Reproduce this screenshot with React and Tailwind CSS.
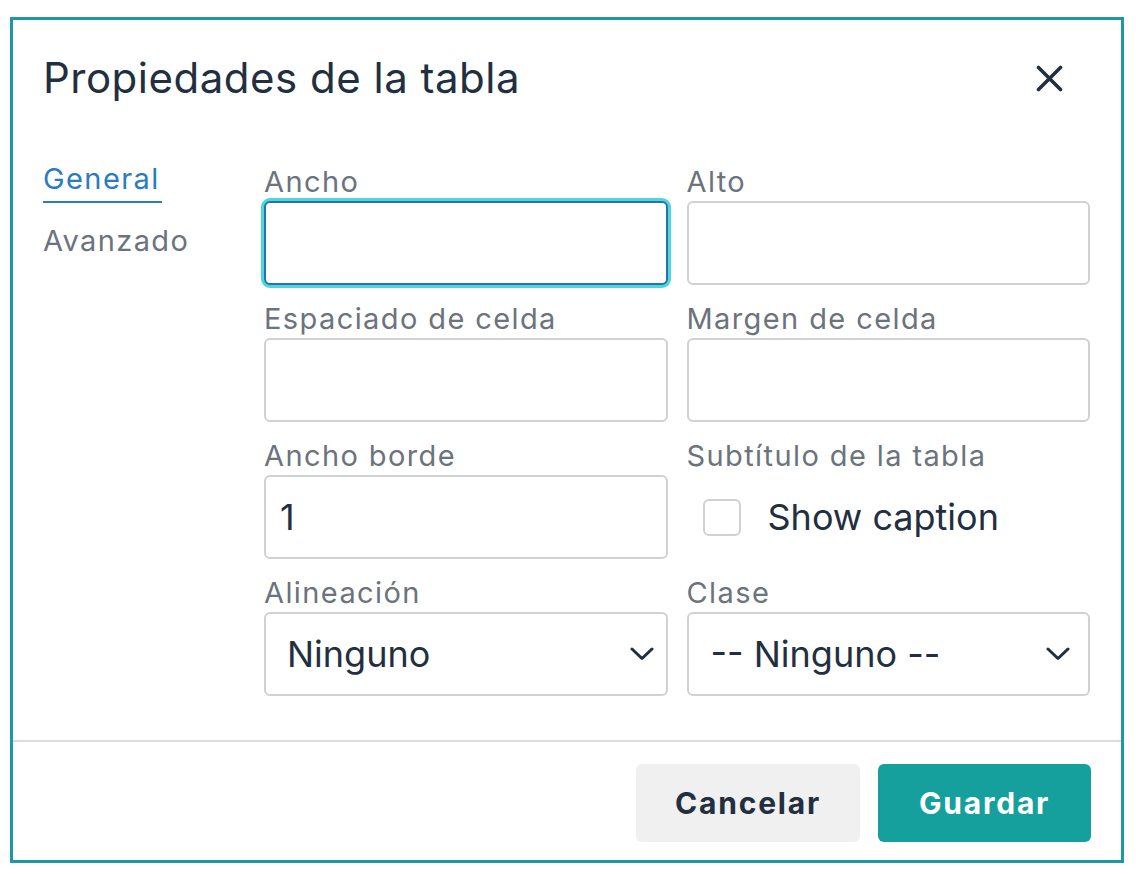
import { useState } from "react";

const fieldLabel = "block h-[28px] text-[29px] leading-none tracking-[1.4px] text-[#6b737d]";
const boxBase = "mt-[6px] h-[84px] w-full rounded-[6px] border-2 border-[#cfd1d4] bg-white";

const Chevron = () => (
  <svg width="24" height="14" viewBox="0 0 24 14" fill="none">
    <path d="M2 2 L12 11.5 L22 2" stroke="#222f3e" strokeWidth="3" strokeLinecap="round" strokeLinejoin="round" />
  </svg>
);

const TableProperties = () => {
  const [width, setWidth] = useState("");
  const [height, setHeight] = useState("");
  const [spacing, setSpacing] = useState("");
  const [padding, setPadding] = useState("");
  const [border, setBorder] = useState("1");
  const [caption, setCaption] = useState(false);

  return (
    <div className="min-h-[874px] bg-white pl-[10px] pt-[17px] font-['Inter','Liberation_Sans',sans-serif] text-[#222f3e]">
      <div className="flex h-[846px] w-[1114px] flex-col overflow-hidden border-[3px] border-[#1e98a6] bg-white">
        {/* header */}
        <div className="flex items-start justify-between pl-[30px] pr-[58px] pt-[37px]">
          <h1 className="text-[42px] font-normal leading-none tracking-[0.5px]">Propiedades de la tabla</h1>
          <button className="mt-[8px]">
            <svg width="27" height="27" viewBox="0 0 27 27">
              <path d="M2.5 2.5 L24.5 24.5 M24.5 2.5 L2.5 24.5" stroke="#222f3e" strokeWidth="3.6" strokeLinecap="round" />
            </svg>
          </button>
        </div>

        {/* body */}
        <div className="flex pl-[30px] pr-[31px] pt-[68px] pb-[44px]">
          <div className="w-[221px] shrink-0 -mt-[3px]">
            <div className="inline-block border-b-2 border-[#2a7bbf] pb-[8px] pr-[2px] text-[29px] leading-none tracking-[1.4px] text-[#2a7bbf]">General</div>
            <div className="mt-[23px] text-[29px] leading-none tracking-[1.4px] text-[#6b737d]">Avanzado</div>
          </div>

          <div className="grid flex-1 grid-cols-2 gap-x-[19px] gap-y-[19px]">
            <div>
              <label className={fieldLabel}>Ancho</label>
              <input
                value={width}
                onChange={(e) => setWidth(e.target.value)}
                className="mt-[6px] h-[84px] w-full rounded-[6px] border-2 border-[#2672b0] bg-white px-[14px] text-[36px] outline-none ring-[3px] ring-[#4fd6d8]"
              />
            </div>
            <div>
              <label className={fieldLabel}>Alto</label>
              <input value={height} onChange={(e) => setHeight(e.target.value)} className={boxBase + " px-[14px] text-[36px] outline-none"} />
            </div>

            <div>
              <label className={fieldLabel}>Espaciado de celda</label>
              <input value={spacing} onChange={(e) => setSpacing(e.target.value)} className={boxBase + " px-[14px] text-[36px] outline-none"} />
            </div>
            <div>
              <label className={fieldLabel}>Margen de celda</label>
              <input value={padding} onChange={(e) => setPadding(e.target.value)} className={boxBase + " px-[14px] text-[36px] outline-none"} />
            </div>

            <div>
              <label className={fieldLabel}>Ancho borde</label>
              <input value={border} onChange={(e) => setBorder(e.target.value)} className={boxBase + " px-[14px] text-[36px] text-[#222f3e] outline-none"} />
            </div>
            <div>
              <label className={fieldLabel}>Subtítulo de la tabla</label>
              <div className="mt-[6px] flex h-[84px] items-center pl-[16px]">
                <button
                  onClick={() => setCaption(!caption)}
                  className="h-[37px] w-[38px] rounded-[6px] border-2 border-[#cfd1d4] bg-white"
                />
                <span className="ml-[27px] text-[36px] leading-none">Show caption</span>
              </div>
            </div>

            <div>
              <label className={fieldLabel}>Alineación</label>
              <div className={boxBase + " flex items-center justify-between pl-[21px] pr-[12px]"}>
                <span className="text-[36px] leading-none">Ninguno</span>
                <Chevron />
              </div>
            </div>
            <div>
              <label className={fieldLabel}>Clase</label>
              <div className={boxBase + " flex items-center justify-between pl-[22px] pr-[18px]"}>
                <span className="text-[36px] leading-none">-- Ninguno --</span>
                <Chevron />
              </div>
            </div>
          </div>
        </div>

        {/* footer */}
        <div className="border-t-2 border-[#dcdcdc] pr-[30px] pt-[22px]">
          <div className="flex justify-end gap-[18px]">
            <button className="h-[78px] w-[224px] rounded-[6px] bg-[#f0f0f0] text-[30px] font-bold tracking-[1.8px] text-[#222f3e]">Cancelar</button>
            <button className="h-[78px] w-[213px] rounded-[6px] bg-[#15a09d] text-[30px] font-bold tracking-[1.8px] text-white">Guardar</button>
          </div>
        </div>
      </div>
    </div>
  );
};

export default function App() {
  return <TableProperties />;
}
